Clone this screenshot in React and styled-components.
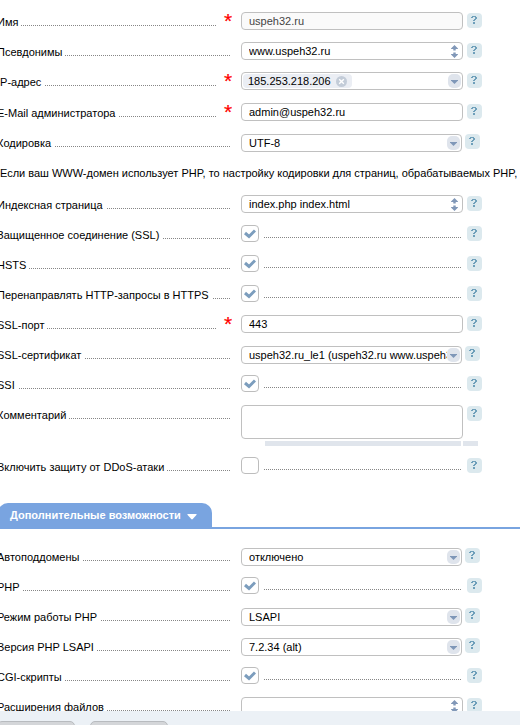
import React from 'react'
import styled, { createGlobalStyle } from 'styled-components'

const GlobalStyle = createGlobalStyle`
  * { box-sizing: border-box; }

  body {
    margin: 0;
    overflow: hidden;
    background: #fff;
    font-family: "Liberation Sans", Arial, sans-serif;
    font-size: 11px;
    color: #000;
  }
`

const Page = styled.div`
  display: flex;
  flex-direction: column;
  width: 520px;
  height: 725px;
  overflow: hidden;
`

const Form = styled.div`
  flex: none;
  height: 711px;
  padding-top: 12px;
  overflow: hidden;
`

const Row = styled.div`
  display: flex;
  align-items: flex-start;
  height: ${p => p.$height || 30}px;
`

const LabelCell = styled.div`
  flex: none;
  display: flex;
  align-items: flex-start;
  width: 241px;
  height: 18px;
  padding-right: ${p => (p.$required ? 8 : 11)}px;
`

const LabelText = styled.span`
  flex: none;
  margin-left: -3px;
  line-height: 13px;
  padding-top: 4px;
  white-space: nowrap;
`

const Dots = styled.i`
  flex: 1;
  height: 1px;
  margin-top: ${p => p.$top}px;
  margin-left: ${p => p.$left}px;
  background: repeating-linear-gradient(270deg, #868686 0 1px, #fff 1px 2px);
`

const Star = styled.span`
  width: 9px;
  margin-left: 8px;
  font-size: 21px;
  line-height: 18px;
  color: #ff0000;
  -webkit-text-stroke: 0.2px #ff0000;
`

const Field = styled.div`
  flex: none;
  display: flex;
  align-items: center;
  justify-content: space-between;
  width: ${p => (p.$select ? 221 : 222)}px;
  height: ${p => p.$height || 18}px;
  margin-top: ${p => (p.$select ? 1 : 0)}px;
  padding: 0 ${p => (p.$select ? 1 : p.$tag ? 1 : 4)}px 0 ${p => (p.$tag ? 1 : 7)}px;
  border: 1px solid #c0c0c0;
  border-radius: 4px;
  background: ${p => (p.$disabled ? '#fafafa' : '#fff')};
  color: ${p => (p.$disabled ? '#444' : '#000')};
`

const Value = styled.span`
  flex: 1;
  overflow: hidden;
  white-space: nowrap;
  line-height: 14px;
`

const DropButton = styled.span`
  flex: none;
  display: flex;
  align-items: center;
  justify-content: center;
  width: 13px;
  height: 14px;
  padding-top: 2px;
  border-radius: 5px;
  background: #dfe4ec;
`

const Tag = styled.span`
  display: flex;
  align-items: center;
  justify-content: space-between;
  width: 109px;
  height: 14px;
  padding: 0 5px 0 5px;
  border-radius: 4px;
  background: #ebeef4;
`

const CheckCell = styled.div`
  flex: none;
  display: flex;
  align-items: flex-start;
  width: 222px;
  padding-right: 2px;
`

const CheckBox = styled.span`
  display: flex;
  align-items: center;
  justify-content: center;
  width: 18px;
  height: 17px;
  border: 1px solid #bdbdbd;
  border-radius: 4px;
`

const HelpBox = styled.span`
  flex: none;
  display: flex;
  align-items: flex-start;
  justify-content: center;
  width: 15px;
  height: 15px;
  margin-top: 1px;
  margin-left: ${p => (p.$select ? 3 : 4)}px;
  padding: 3px 1px 0 0;
  border-radius: 4px;
  background: #dce9ee;
`

const CommentCell = styled.div`
  flex: none;
  width: 222px;
`

const Grips = styled.div`
  display: flex;
  gap: 2px;
  width: 237px;
  margin-top: 2px;
  padding-left: 24px;
`

const Grip = styled.i`
  width: ${p => p.$width}px;
  height: 5px;
  background: #e0e5ec;
`

const Note = styled.div`
  height: 32px;
  padding-top: 4px;
  line-height: 13px;
  white-space: nowrap;
  letter-spacing: -0.012px;
`

const Section = styled.div`
  display: flex;
  height: 26px;
  margin: 16px 0 18px;
  border-bottom: 2px solid #79a4e0;
`

const SectionTab = styled.div`
  display: flex;
  align-items: center;
  gap: 6px;
  width: 214px;
  height: 24px;
  margin-left: -2px;
  padding-left: 12px;
  border-radius: 10px 10px 0 0;
  background: #79a4e0;
  color: #fff;
  font-weight: bold;
  white-space: nowrap;

  svg {
    margin-top: 3px;
  }
`

const Footer = styled.div`
  flex: none;
  display: flex;
  gap: 15px;
  height: 14px;
  padding-top: 10px;
  background: #ecf1f6;
`

const FooterButton = styled.div`
  width: 78px;
  height: 22px;
  margin-left: ${p => p.$left || 0}px;
  border: 1px solid #b8bbbf;
  border-radius: 5px;
  background: #d4d6d9;
`

const Help = ({ select }) => (
  <HelpBox $select={select}>
    <svg width="6" height="8" viewBox="0 0 6 8" shapeRendering="crispEdges">
      <path fill="#6e9fba" d="M1 0h4v1h1v2h-1v1h-1v1h-2v-1h1v-1h1v-2h-2v1h-2v-1h1zM2 6h2v2h-2z" />
    </svg>
  </HelpBox>
)

const Down = () => (
  <svg width="7" height="4" viewBox="0 0 7 4">
    <path fill="#7f97b8" d="M0 0h7v.6L3.5 4 0 .6z" />
  </svg>
)

const UpDown = () => (
  <svg width="7" height="13" viewBox="0 0 7 13">
    <path fill="#8198b8" d="M3.5 0L7 3.4V4H4.7V5.6H2.3V4H0V3.4zM3.5 13L7 9.6V9H4.7V7.4H2.3V9H0V9.6z" />
  </svg>
)

const Tick = () => (
  <svg width="12" height="10" viewBox="0 0 12 10">
    <path fill="none" stroke="#7c9dbd" strokeWidth="3" d="M1 4L5 7.5L11 1.5" />
  </svg>
)

const Remove = () => (
  <svg width="11" height="11" viewBox="0 0 11 11">
    <circle cx="5.5" cy="5.5" r="5.5" fill="#c3ccd8" />
    <path stroke="#fff" strokeWidth="1.4" d="M3.2 3.2l4.6 4.6M7.8 3.2l-4.6 4.6" />
  </svg>
)

const Control = ({ type, value, on }) => {
  if (type === 'check') {
    return (
      <CheckCell>
        <CheckBox>{on && <Tick />}</CheckBox>
        <Dots $top={12} $left={5} />
      </CheckCell>
    )
  }
  if (type === 'comment') {
    return (
      <CommentCell>
        <Field $height={34} />
        <Grips>
          <Grip $width={196} />
          <Grip $width={15} />
        </Grips>
      </CommentCell>
    )
  }
  if (type === 'tag') {
    return (
      <Field $tag>
        <Tag>
          <span>{value}</span>
          <Remove />
        </Tag>
        <DropButton><Down /></DropButton>
      </Field>
    )
  }
  return (
    <Field $select={type === 'select'} $disabled={type === 'disabled'}>
      <Value>{value}</Value>
      {type === 'select' && <DropButton><Down /></DropButton>}
      {type === 'list' && <UpDown />}
    </Field>
  )
}

const FormRow = ({ label, required, height, ...control }) => (
  <Row $height={height}>
    <LabelCell $required={required}>
      <LabelText>{label}</LabelText>
      <Dots $top={13} $left={3} />
      {required && <Star>*</Star>}
    </LabelCell>
    <Control {...control} />
    <Help select={control.type === 'select'} />
  </Row>
)

const domainRows = [
  { label: 'Имя', required: true, type: 'disabled', value: 'uspeh32.ru' },
  { label: 'Псевдонимы', type: 'list', value: 'www.uspeh32.ru' },
  { label: 'IP-адрес', required: true, height: 31, type: 'tag', value: '185.253.218.206' },
  { label: 'E-Mail администратора', required: true, type: 'text', value: 'admin@uspeh32.ru' },
  { label: 'Кодировка', type: 'select', value: 'UTF-8' },
]

const siteRows = [
  { label: 'Индексная страница', type: 'list', value: 'index.php index.html' },
  { label: 'Защищенное соединение (SSL)', type: 'check', on: true },
  { label: 'HSTS', type: 'check', on: true },
  { label: 'Перенаправлять HTTP-запросы в HTTPS', type: 'check', on: true },
  { label: 'SSL-порт', required: true, type: 'text', value: '443' },
  { label: 'SSL-сертификат', type: 'select', value: 'uspeh32.ru_le1 (uspeh32.ru www.uspeh32.ru)' },
  { label: 'SSI', type: 'check', on: true },
  { label: 'Комментарий', height: 52, type: 'comment' },
  { label: 'Включить защиту от DDoS-атаки', type: 'check' },
]

const extraRows = [
  { label: 'Автоподдомены', type: 'select', value: 'отключено' },
  { label: 'PHP', type: 'check', on: true },
  { label: 'Режим работы PHP', type: 'select', value: 'LSAPI' },
  { label: 'Версия PHP LSAPI', type: 'select', value: '7.2.34 (alt)' },
  { label: 'CGI-скрипты', type: 'check', on: true },
  { label: 'Расширения файлов', type: 'list', value: '' },
]

export default function App() {
  return (
    <Page>
      <GlobalStyle />
      <Form>
        {domainRows.map(row => <FormRow key={row.label} {...row} />)}
        <Note>
          Если ваш WWW-домен использует PHP, то настройку кодировки для страниц, обрабатываемых PHP,
        </Note>
        {siteRows.map(row => <FormRow key={row.label} {...row} />)}
        <Section>
          <SectionTab>
            Дополнительные возможности
            <svg width="10" height="6" viewBox="0 0 10 6">
              <path fill="#fff" d="M1 0h8q1 0 .6.8L5.8 5q-.8.8-1.6 0L.4.8Q0 0 1 0z" />
            </svg>
          </SectionTab>
        </Section>
        {extraRows.map(row => <FormRow key={row.label} {...row} />)}
      </Form>
      <Footer>
        <FooterButton $left={-3} />
        <FooterButton />
      </Footer>
    </Page>
  )
}
